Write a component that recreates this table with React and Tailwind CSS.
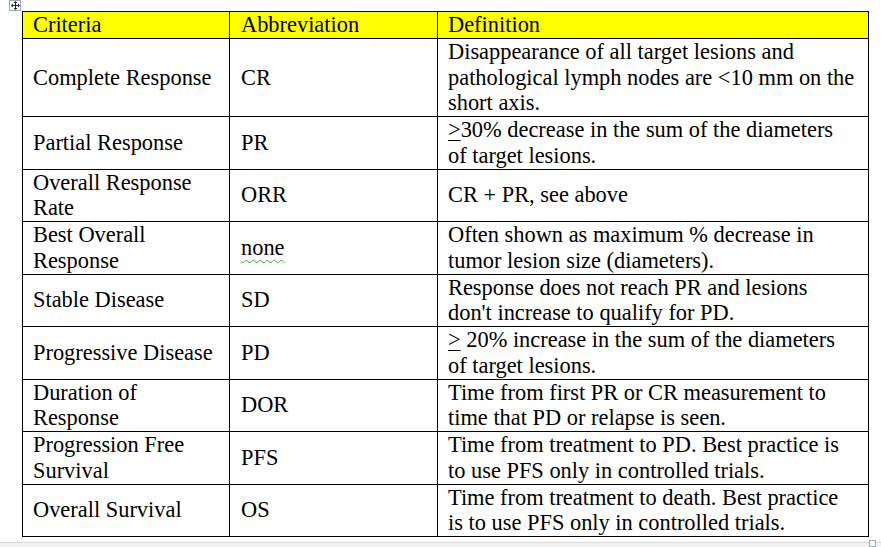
import React from 'react';

const serif = { fontFamily: '"Liberation Serif", "Times New Roman", serif' };

// underlined ">" stands in for Word's "greater than or equal"
const Ge = () => <span className="underline decoration-1 underline-offset-[3px]">&gt;</span>;

const rows = [
  {
    criteria: ['Complete Response'],
    abbr: 'CR',
    def: ['Disappearance of all target lesions and', 'pathological lymph nodes are <10 mm on the', 'short axis.'],
  },
  {
    criteria: ['Partial Response'],
    abbr: 'PR',
    def: [<><Ge />30% decrease in the sum of the diameters</>, 'of target lesions.'],
  },
  { criteria: ['Overall Response', 'Rate'], abbr: 'ORR', def: ['CR + PR, see above'] },
  {
    criteria: ['Best Overall', 'Response'],
    abbr: 'none',
    wavy: true,
    def: ['Often shown as maximum % decrease in', 'tumor lesion size (diameters).'],
  },
  {
    criteria: ['Stable Disease'],
    abbr: 'SD',
    def: ['Response does not reach PR and lesions', "don't increase to qualify for PD."],
  },
  {
    criteria: ['Progressive Disease'],
    abbr: 'PD',
    def: [<><Ge /> 20% increase in the sum of the diameters</>, 'of target lesions.'],
  },
  {
    criteria: ['Duration of', 'Response'],
    abbr: 'DOR',
    def: ['Time from first PR or CR measurement to', 'time that PD or relapse is seen.'],
  },
  {
    criteria: ['Progression Free', 'Survival'],
    abbr: 'PFS',
    def: ['Time from treatment to PD. Best practice is', 'to use PFS only in controlled trials.'],
  },
  {
    criteria: ['Overall Survival'],
    abbr: 'OS',
    def: ['Time from treatment to death. Best practice', 'is to use PFS only in controlled trials.'],
  },
];

function Lines({ items }) {
  return items.map((line, i) => (
    <div key={i} className="whitespace-nowrap">
      {line}
    </div>
  ));
}

function MoveHandle() {
  return (
    <div className="absolute left-[9px] top-0 w-[12px] h-[11px] border border-[#9aa9c4] bg-white flex items-center justify-center">
      <svg width="9" height="9" viewBox="0 0 9 9" fill="#222">
        <rect x="4" y="1" width="1" height="7" />
        <rect x="1" y="4" width="7" height="1" />
        <polygon points="4.5,0 2.5,2 6.5,2" />
        <polygon points="4.5,9 2.5,7 6.5,7" />
        <polygon points="0,4.5 2,2.5 2,6.5" />
        <polygon points="9,4.5 7,2.5 7,6.5" />
      </svg>
    </div>
  );
}

export default function App() {
  return (
    <div className="relative w-[881px] h-[547px] bg-white overflow-hidden text-black" style={serif}>
      <MoveHandle />

      <div className="pt-[11px] pl-[22px]">
        <table className="table-fixed border-collapse w-[846px] text-[22.4px] leading-[25.75px]">
          <colgroup>
            <col className="w-[207px]" />
            <col className="w-[208px]" />
            <col className="w-[431px]" />
          </colgroup>
          <thead>
            <tr className="bg-[#ffff00]">
              <th className="border border-black pl-[10px] p-0 text-left font-normal">Criteria</th>
              <th className="border border-black pl-[11px] p-0 text-left font-normal">Abbreviation</th>
              <th className="border border-black pl-[10px] p-0 text-left font-normal">Definition</th>
            </tr>
          </thead>
          <tbody>
            {rows.map((row) => (
              <tr key={row.abbr}>
                <td className="border border-black pl-[10px] p-0 align-middle">
                  <Lines items={row.criteria} />
                </td>
                <td className="border border-black pl-[11px] p-0 align-middle">
                  {row.wavy ? (
                    <span className="underline decoration-wavy decoration-[#3aa33a] decoration-1 underline-offset-[4px]">
                      {row.abbr}
                    </span>
                  ) : (
                    row.abbr
                  )}
                </td>
                <td className="border border-black pl-[10px] p-0 align-middle">
                  <Lines items={row.def} />
                </td>
              </tr>
            ))}
          </tbody>
        </table>
      </div>

      {/* bottom scroll strip */}
      <div className="absolute left-0 right-0 bottom-0 h-[5px] border-t border-[#d6d6d6] bg-[#f1f1f1]" />
      <div className="absolute left-[869px] top-[540px] w-[7px] h-[7px] border border-[#9aa9c4] bg-white" />
    </div>
  );
}
